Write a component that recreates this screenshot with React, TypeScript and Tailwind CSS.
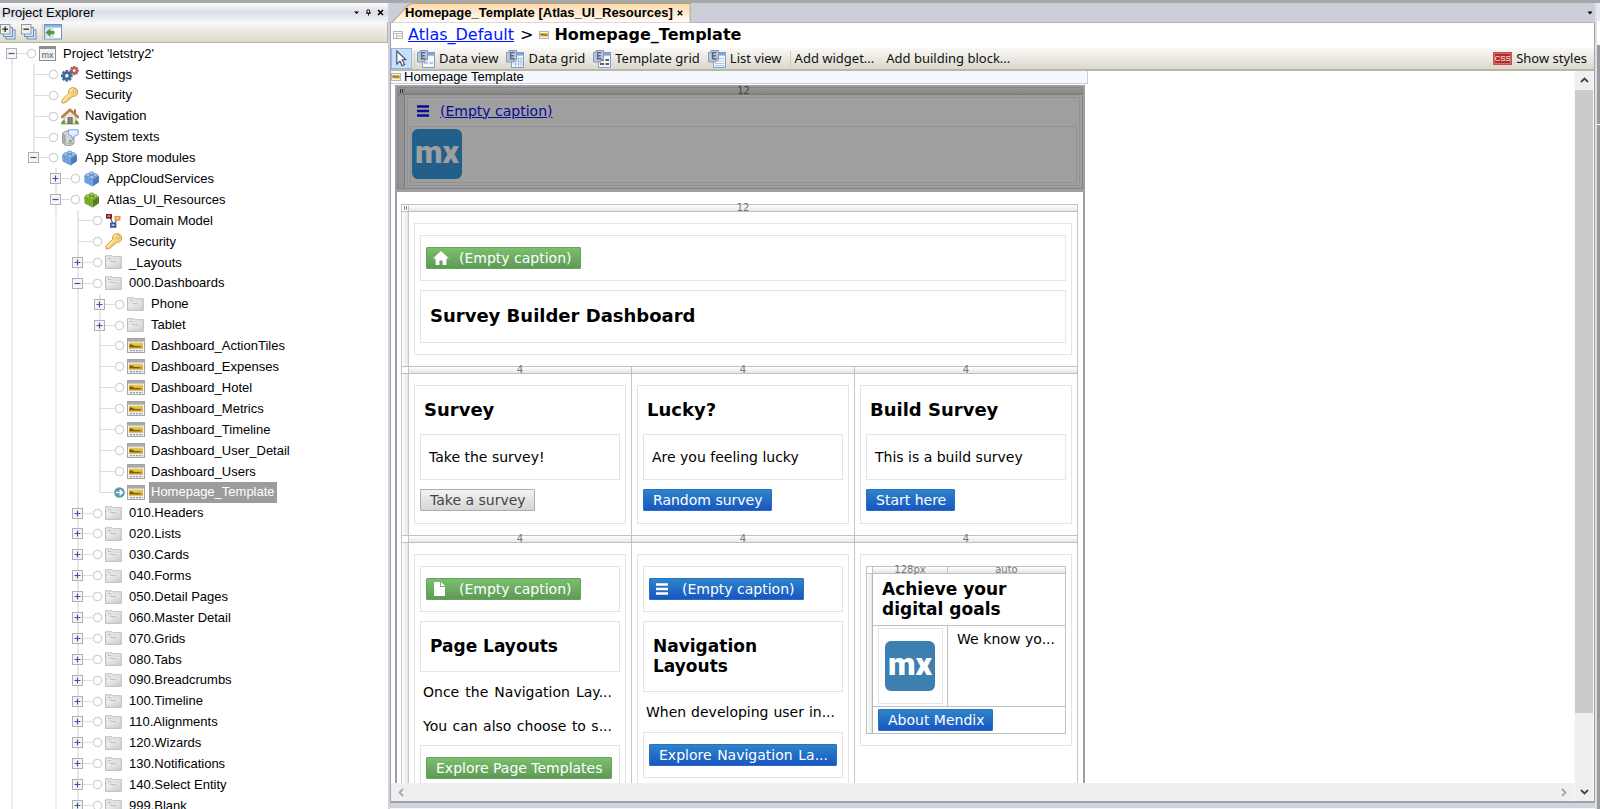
import React from "react";

/* ---------- icons ---------- */

function GearShape({ cx, cy, r, color }: { cx: number; cy: number; r: number; color: string }) {
  const teeth = [0, 45, 90, 135];
  return (
    <g>
      {teeth.map((a) => (
        <rect key={a} x={cx - r} y={cy - r * 0.24} width={r * 2} height={r * 0.48} fill={color} transform={`rotate(${a} ${cx} ${cy})`} />
      ))}
      <circle cx={cx} cy={cy} r={r * 0.74} fill={color} />
      <circle cx={cx} cy={cy} r={r * 0.3} fill="#fff" />
    </g>
  );
}

function SettingsIcon() {
  return (
    <svg width="18" height="16" viewBox="0 0 18 16" aria-hidden="true">
      <GearShape cx={13.2} cy={4.6} r={4.6} color="#b0615c" />
      <GearShape cx={5.8} cy={9.8} r={5.8} color="#3f6c97" />
    </svg>
  );
}

function KeyIcon() {
  return (
    <svg width="18" height="17" viewBox="0 0 18 17" aria-hidden="true">
      <path d="M9.2 1.4 Q12.5 -0.4 15 1.4 Q17.8 3.8 16.4 7 Q15.2 9.4 12.6 9.6 L11.2 9.6 L10 11 L8.6 11.4 L8.2 12.8 L6.5 13.2 L5.8 14.8 L2.4 16.2 L0.8 15.8 L1 13 L7.4 6.4 Q7 3 9.2 1.4 Z" fill="#f5d27a" stroke="#d3a346" strokeWidth="1" />
      <path d="M2.2 14 L8.6 7.4 M9 4.6 Q9.6 2.4 12 1.8" stroke="#fdf0b8" strokeWidth="1.3" fill="none" />
      <circle cx="13.4" cy="3.9" r="1.4" fill="#fff" stroke="#c9953a" strokeWidth="0.8" />
    </svg>
  );
}

function HouseIcon() {
  return (
    <svg width="18" height="17" viewBox="0 0 18 17" aria-hidden="true">
      <path d="M0 14.2 H18 V16.4 H0 Z" fill="#6fa653" />
      <path d="M3 8 L9 3 L15 8 V15.4 H3 Z" fill="#efe8d8" stroke="#a49a86" strokeWidth="0.8" />
      <path d="M13 1.2 H15 V5 H13 Z" fill="#a87a4e" />
      <path d="M1 9 L9 1.8 L17 9" fill="none" stroke="#b5824b" strokeWidth="2.6" strokeLinejoin="round" strokeLinecap="round" />
      <path d="M7 9.6 H11.2 V15.4 H7 Z" fill="#8a8782" stroke="#5f5c58" strokeWidth="0.8" />
      <circle cx="2.6" cy="13.8" r="1.6" fill="#5c9a3d" />
      <circle cx="15.4" cy="13.8" r="1.6" fill="#5c9a3d" />
    </svg>
  );
}

function SystemTextsIcon() {
  return (
    <svg width="18" height="17" viewBox="0 0 18 17" aria-hidden="true">
      <path d="M1.5 4 L5 2 H13 V14.5 L10 16.4 H4.5 L1.5 14 Z" fill="#d3d5d8" stroke="#8f9296" strokeWidth="0.9" />
      <path d="M1.5 4 L4.8 6 V16.2 L1.5 14 Z" fill="#a8abb0" />
      <path d="M7.4 0.8 H17.2 V5.6 L13 7.4 L11.6 10.6 L10.6 7 L7.4 5.4 Z" fill="#e3effc" stroke="#7aa3d6" strokeWidth="1" />
      <circle cx="9.4" cy="12" r="1.3" fill="#58b548" />
      <path d="M6.4 14.2 H12" stroke="#8f9296" strokeWidth="0.8" />
    </svg>
  );
}

function BrickIcon({ tone }: { tone: "blue" | "green" }) {
  const c = tone === "blue" ? ["#a9c9f2", "#6f9fdc", "#4c7bc0"] : ["#a6d04c", "#79a92b", "#55801a"];
  return (
    <svg width="17" height="16" viewBox="0 0 17 16" aria-hidden="true">
      <path d="M1 4.4 L8.4 1.6 L16 4.4 L9.6 8 Z" fill={c[0]} />
      <path d="M1 4.4 L9.6 8 V15.6 L1.6 11.6 Z" fill={c[1]} />
      <path d="M9.6 8 L16 4.4 V11.2 L9.6 15.6 Z" fill={c[2]} />
      <ellipse cx="8.6" cy="2.4" rx="2.3" ry="1.5" fill={c[0]} stroke={c[2]} strokeWidth="0.7" />
      <ellipse cx="4.8" cy="4.2" rx="2.2" ry="1.5" fill={c[0]} stroke={c[2]} strokeWidth="0.7" />
      <ellipse cx="12.2" cy="4.2" rx="2.2" ry="1.5" fill={c[0]} stroke={c[2]} strokeWidth="0.7" />
      <ellipse cx="8.8" cy="5.8" rx="2.2" ry="1.5" fill={c[0]} stroke={c[2]} strokeWidth="0.7" />
    </svg>
  );
}

function DomainIcon() {
  return (
    <svg width="17" height="16" viewBox="0 0 17 16" aria-hidden="true">
      <path d="M5 4 L7.6 10 M12.5 6 L9 11" stroke="#555" strokeWidth="1.2" />
      <rect x="1" y="1" width="6" height="4.6" fill="#7d2328" />
      <rect x="2.6" y="2.4" width="2.6" height="1.4" fill="#d9a9aa" />
      <rect x="9.5" y="3" width="6" height="4.6" fill="#f0933c" />
      <rect x="11" y="4.4" width="2.8" height="1.4" fill="#fbd6a9" />
      <rect x="5" y="9.6" width="6.4" height="5.2" fill="#2f5ea6" />
      <rect x="6.6" y="11.2" width="3" height="1.6" fill="#b9cdec" />
    </svg>
  );
}

function FolderIcon() {
  return (
    <svg width="17" height="14" viewBox="0 0 17 14" aria-hidden="true">
      <defs>
        <linearGradient id="folderFill" x1="0" y1="0" x2="1" y2="1">
          <stop offset="0" stopColor="#fafafa" />
          <stop offset="1" stopColor="#cbcbcb" />
        </linearGradient>
      </defs>
      <path d="M0.5 0.8 H7 L8 1.8 H16.3 V13.4 H0.5 Z" fill="#ececec" stroke="#b2b2b2" strokeWidth="0.9" />
      <path d="M1 13 V5.8 H5 L8.4 4 H15.8 V13 Z" fill="url(#folderFill)" stroke="#cdcdcd" strokeWidth="0.7" />
      <path d="M2.4 3.4 H6.4 M5.4 6.6 H11" stroke="#bdbdbd" strokeWidth="1" />
    </svg>
  );
}

function PageIcon() {
  return (
    <svg width="18" height="15" viewBox="0 0 18 15" aria-hidden="true">
      <defs>
        <linearGradient id="pageGold" x1="0" y1="0" x2="0" y2="1">
          <stop offset="0" stopColor="#e9cf5c" />
          <stop offset="1" stopColor="#cf9f1f" />
        </linearGradient>
      </defs>
      <rect x="0.5" y="0.5" width="17" height="14" fill="#f2f2f2" stroke="#a3a3a3" />
      <rect x="1" y="1" width="16" height="2.6" fill="#a9abae" />
      <rect x="2" y="4.6" width="14" height="6" fill="url(#pageGold)" />
      <path d="M2.5 6.6 H5 L7.4 8 H11 L14 8.4 V9.2 H2.5 Z" fill="#7c5b12" />
      <path d="M3 12.7 H5" stroke="#7fae6a" strokeWidth="1.2" />
      <path d="M6 12.7 H8 M9 12.7 H11 M12 12.7 H14" stroke="#7f9cd8" strokeWidth="1.2" />
      <path d="M14.6 12.7 H15.6" stroke="#d68a7f" strokeWidth="1.2" />
    </svg>
  );
}

function SmallPageIcon() {
  return (
    <svg width="10" height="8" viewBox="0 0 10 8" aria-hidden="true">
      <rect x="0.5" y="0.5" width="9" height="7" fill="#f2f2f2" stroke="#b4b4b4" />
      <rect x="1" y="2" width="8" height="3.4" fill="#dcb63a" />
      <path d="M2 3.6 H4 L6 4.2 H8" stroke="#7a5b15" strokeWidth="1" fill="none" />
    </svg>
  );
}

function LayoutIcon() {
  return (
    <svg width="10" height="8" viewBox="0 0 10 8" aria-hidden="true">
      <rect x="0.5" y="0.5" width="9" height="7" fill="#fff" stroke="#b4b4b4" />
      <path d="M1 2.6 H9 M3.5 2.6 V7 M3.5 5 H9" stroke="#b4b4b4" strokeWidth="0.9" />
    </svg>
  );
}

function ProjectIcon() {
  return (
    <span className="flex h-[15px] w-[17px] items-end justify-center border border-t-[3px] border-[#8f8f8f] bg-[#f3f3f3] font-['Liberation_Sans'] text-[9px] leading-[10px] text-[#555]">
      mx
    </span>
  );
}

function StackIcon({ sign }: { sign: "plus" | "minus" }) {
  return (
    <svg width="16" height="16" viewBox="0 0 16 16" aria-hidden="true">
      <rect x="6" y="6" width="9" height="9" fill="#dbe6f4" stroke="#6d8fb8" />
      <rect x="3.5" y="3.5" width="9" height="9" fill="#dbe6f4" stroke="#6d8fb8" />
      <rect x="0.5" y="0.5" width="9.5" height="9.5" fill="#f4efe0" stroke="#7f9cc0" />
      <path d="M2.4 5.2 H8" stroke="#2b2b2b" strokeWidth="1.3" />
      {sign === "plus" && <path d="M5.2 2.4 V8" stroke="#2b2b2b" strokeWidth="1.3" />}
    </svg>
  );
}

function LocateIcon() {
  return (
    <svg width="18" height="16" viewBox="0 0 18 16" aria-hidden="true">
      <rect x="0.5" y="0.5" width="17" height="14.5" fill="#fff" stroke="#6c93c4" />
      <rect x="1" y="1" width="16" height="2.6" fill="#8fb4e2" />
      <rect x="1" y="3.6" width="9" height="11" fill="#dce6f2" />
      <path d="M1.4 8.6 L6.4 4.2 V7 H10.4 V10.2 H6.4 V13 Z" fill="#4f9a3e" />
    </svg>
  );
}

type WidgetKind = "view" | "grid" | "template" | "list";

function WidgetIcon({ kind }: { kind: WidgetKind }) {
  return (
    <svg width="18" height="18" viewBox="0 0 18 18" aria-hidden="true">
      <rect x="5.5" y="2.5" width="12" height="15" fill="#f4f8fd" stroke="#7f9fcf" />
      <rect x="6" y="3" width="11" height="2.6" fill="#7ea4dc" />
      {kind === "view" && <path d="M7 13 H11 M12.5 13 H16" stroke="#a9b9d0" strokeWidth="1.6" />}
      {kind === "grid" && <path d="M7 9 H17 M7 11.5 H17 M7 14 H17 M9.5 7 V17 M12.5 7 V17 M15 7 V17" stroke="#a9c0e2" strokeWidth="0.9" />}
      {kind === "template" && <path d="M7 10 H11 M12.5 10 H16 M7 14 H11 M12.5 14 H16" stroke="#5d5f57" strokeWidth="1.8" />}
      {kind === "list" && <path d="M7 8.5 H16.5 M7 11 H16.5 M7 13.5 H16.5 M7 15.6 H16.5" stroke="#b5c8e6" strokeWidth="1.1" />}
      <path d="M0.5 2.5 H3 V0.5 H10.5 V10 H8 V12 H0.5 Z" fill="#bcc6da" stroke="#8c99b5" />
      <path d="M8.4 2.6 H4.6 V8.8 H8.4 M4.6 5.7 H7.8" fill="none" stroke="#56657f" strokeWidth="1.4" />
    </svg>
  );
}

function CursorIcon() {
  return (
    <svg width="11" height="17" viewBox="0 0 11 17" aria-hidden="true">
      <path d="M0.8 1 L9.8 9.6 L6.2 10 L8.6 14.6 L6.2 15.8 L4 11.2 L0.8 14 Z" fill="#fff" stroke="#3c4a66" strokeWidth="1.1" />
    </svg>
  );
}

function BurgerIcon() {
  return (
    <svg width="12" height="12" viewBox="0 0 12 12" aria-hidden="true">
      <path d="M0 1.5 H12 M0 6 H12 M0 10.5 H12" stroke="currentColor" strokeWidth="2.4" />
    </svg>
  );
}

function HomeGlyph() {
  return (
    <svg width="16" height="14" viewBox="0 0 16 14" aria-hidden="true">
      <path d="M8 0 L16 7.4 H13.4 V14 H9.6 V9.4 H6.4 V14 H2.6 V7.4 H0 Z" fill="currentColor" />
    </svg>
  );
}

function FileGlyph() {
  return (
    <svg width="16" height="14" viewBox="0 0 16 14" aria-hidden="true">
      <path d="M1 0 H7 V5 H12 V14 H1 Z M8 0 L12 4 H8 Z" fill="currentColor" />
    </svg>
  );
}

function Chevron({ dir }: { dir: "up" | "down" | "left" | "right" }) {
  const d = { up: "M1 6 L4.5 2.5 L8 6", down: "M1 3 L4.5 6.5 L8 3", left: "M6 1 L2.5 4.5 L6 8", right: "M3 1 L6.5 4.5 L3 8" }[dir];
  return (
    <svg width="9" height="9" viewBox="0 0 9 9" aria-hidden="true">
      <path d={d} fill="none" stroke="currentColor" strokeWidth="1.8" />
    </svg>
  );
}

/* ---------- project tree ---------- */

type Kind = "project" | "settings" | "key" | "house" | "texts" | "blue" | "green" | "domain" | "folder" | "page";
type Node = { label: string; level: number; kind: Kind; open?: boolean; last?: boolean; active?: boolean };

const folder = (label: string, level = 3, open = false): Node => ({ label, level, kind: "folder", open });
const page = (label: string): Node => ({ label, level: 4, kind: "page" });

const nodes: Node[] = [
  { label: "Project 'letstry2'", level: 0, kind: "project", open: true },
  { label: "Settings", level: 1, kind: "settings" },
  { label: "Security", level: 1, kind: "key" },
  { label: "Navigation", level: 1, kind: "house" },
  { label: "System texts", level: 1, kind: "texts" },
  { label: "App Store modules", level: 1, kind: "blue", open: true, last: true },
  { label: "AppCloudServices", level: 2, kind: "blue", open: false },
  { label: "Atlas_UI_Resources", level: 2, kind: "green", open: true },
  { label: "Domain Model", level: 3, kind: "domain" },
  { label: "Security", level: 3, kind: "key" },
  folder("_Layouts"),
  folder("000.Dashboards", 3, true),
  folder("Phone", 4),
  folder("Tablet", 4),
  page("Dashboard_ActionTiles"),
  page("Dashboard_Expenses"),
  page("Dashboard_Hotel"),
  page("Dashboard_Metrics"),
  page("Dashboard_Timeline"),
  page("Dashboard_User_Detail"),
  page("Dashboard_Users"),
  { label: "Homepage_Template", level: 4, kind: "page", last: true, active: true },
  folder("010.Headers"),
  folder("020.Lists"),
  folder("030.Cards"),
  folder("040.Forms"),
  folder("050.Detail Pages"),
  folder("060.Master Detail"),
  folder("070.Grids"),
  folder("080.Tabs"),
  folder("090.Breadcrumbs"),
  folder("100.Timeline"),
  folder("110.Alignments"),
  folder("120.Wizards"),
  folder("130.Notifications"),
  folder("140.Select Entity"),
  folder("999.Blank"),
];

const guidedLevels = [0, 2, 3];

function NodeIcon({ kind }: { kind: Kind }) {
  switch (kind) {
    case "project": return <ProjectIcon />;
    case "settings": return <SettingsIcon />;
    case "key": return <KeyIcon />;
    case "house": return <HouseIcon />;
    case "texts": return <SystemTextsIcon />;
    case "blue": return <BrickIcon tone="blue" />;
    case "green": return <BrickIcon tone="green" />;
    case "domain": return <DomainIcon />;
    case "folder": return <FolderIcon />;
    default: return <PageIcon />;
  }
}

function TreeRow({ node }: { node: Node }) {
  const expandable = node.open !== undefined;
  const spans = Array.from({ length: node.level }, (_, i) => i);
  return (
    <li className="flex min-h-0 shrink basis-[21px] items-stretch">
      {spans.map((i) => (
        <span key={i} className="flex w-[22px] shrink-0 pl-[11px]">
          {guidedLevels.includes(i) && <span className="w-0.5 bg-[#ececec]" />}
        </span>
      ))}
      <span className="grid w-[26px] shrink-0 items-center">
        <span className="col-start-1 row-start-1 flex h-full flex-col pl-[11px]">
          <span className={`w-0.5 flex-1 ${node.level > 0 ? "bg-[#e8e8e8]" : ""}`} />
          <span className={`w-0.5 flex-1 ${node.last ? "" : "bg-[#e8e8e8]"}`} />
        </span>
        <span className="col-start-1 row-start-1 ml-[12px] h-px bg-[#dcdcdc]" />
        {expandable && (
          <button
            type="button"
            aria-label={`${node.open ? "Collapse" : "Expand"} ${node.label}`}
            className="col-start-1 row-start-1 ml-1.5 flex h-[11px] w-[11px] items-center justify-center border border-[#b0b0b0] bg-[#f6f6f6]"
          >
            <svg width="7" height="7" viewBox="0 0 7 7" aria-hidden="true">
              <path d={node.open ? "M0.5 3.5 H6.5" : "M0.5 3.5 H6.5 M3.5 0.5 V6.5"} stroke="#3c55a5" strokeWidth="1.2" />
            </svg>
          </button>
        )}
      </span>
      <span className="flex w-[13px] shrink-0 items-center">
        <svg width="11" height="11" viewBox="0 0 11 11" aria-hidden="true">
          {node.active ? (
            <>
              <circle cx="5.5" cy="5.5" r="5.3" fill="#5a9bb0" />
              <path d="M2 5.5 H8 M5.6 2.8 L8.4 5.5 L5.6 8.2" stroke="#fff" strokeWidth="1.5" fill="none" />
            </>
          ) : (
            <circle cx="5.5" cy="5.5" r="4.2" fill="#fff" stroke="#d2d2d2" strokeWidth="1.3" />
          )}
        </svg>
      </span>
      <span className="flex w-[22px] shrink-0 items-center">
        <NodeIcon kind={node.kind} />
      </span>
      <span className={`flex items-center px-0.5 whitespace-nowrap ${node.active ? "bg-[#9c9c9c] text-white" : ""}`}>
        {node.label}
      </span>
    </li>
  );
}

function ProjectExplorer() {
  return (
    <aside className="flex w-[388px] shrink-0 flex-col overflow-hidden bg-white font-['Liberation_Sans',sans-serif] text-[13px] text-black">
      <header className="flex h-[19px] shrink-0 items-center justify-between bg-linear-to-b from-[#fafbfc] via-[#dcdfe8] to-[#f3f4f8] pr-1 pl-0.5">
        <h2>Project Explorer</h2>
        <div className="flex items-center gap-[5px]">
          <button type="button" aria-label="Window menu">
            <svg width="7" height="7" viewBox="0 0 7 7"><path d="M1 2.5 H6 L3.5 5 Z" fill="#000" /></svg>
          </button>
          <button type="button" aria-label="Pin">
            <svg width="7" height="7" viewBox="0 0 7 7"><path d="M2 1 H4.6 V4 H2 Z M1 4.2 H6 M3.5 4 V6.6" fill="#fff" stroke="#000" strokeWidth="0.9" /></svg>
          </button>
          <button type="button" aria-label="Close">
            <svg width="7" height="7" viewBox="0 0 7 7"><path d="M1 1 L6 6 M6 1 L1 6" stroke="#000" strokeWidth="1.5" /></svg>
          </button>
        </div>
      </header>
      <div className="flex h-[21px] shrink-0 items-center gap-[5px] border-r border-b border-[#b9b59c] bg-linear-to-b from-[#faf9f6] via-[#ebe8e1] to-[#dcd9cc]">
        <button type="button" aria-label="Expand all"><StackIcon sign="plus" /></button>
        <button type="button" aria-label="Collapse all"><StackIcon sign="minus" /></button>
        <span className="-mr-1 h-4 w-px bg-[#d0cdc0]" />
        <button type="button" aria-label="Locate in tree"><LocateIcon /></button>
      </div>
      <div className="min-h-0 flex-1">
        <ul className="flex h-[calc(100%+7px)] flex-col">
          {nodes.map((n, i) => (
            <TreeRow key={i} node={n} />
          ))}
        </ul>
      </div>
    </aside>
  );
}

/* ---------- editor canvas ---------- */

function Caption({ children, tone, icon, fill }: { children: string; tone: "green" | "blue" | "gray"; icon?: React.ReactNode; fill?: boolean }) {
  const tones = {
    green: "border-[#66a45b] from-[#7abf6e] to-[#5f9a56] text-white",
    blue: "border-[#2a6fc0] from-[#2f84c9] to-[#1a55c2] text-white",
    gray: "border-[#adadad] from-[#f3f3f3] to-[#d5d5d5] text-[#444]",
  };
  return (
    <button
      type="button"
      className={`flex h-[22px] items-center rounded-[1px] border bg-linear-to-b pr-2 text-[14px] whitespace-nowrap ${icon ? "pl-1.5" : "pl-[9px]"} ${fill ? "w-full" : ""} ${tones[tone]}`}
    >
      {icon && <span className="flex w-[26px] shrink-0 items-center">{icon}</span>}
      <span className={fill ? "w-full [text-align-last:justify]" : ""}>{children}</span>
    </button>
  );
}

function Box({ children, className = "" }: { children: React.ReactNode; className?: string }) {
  return <div className={`flex flex-col items-start border border-[#e4e4e4] ${className}`}>{children}</div>;
}

function Card({ children }: { children: React.ReactNode }) {
  return <section className="flex flex-col items-stretch border border-[#e4e4e4] px-[5px] py-[11px]">{children}</section>;
}

function Row({ label, columns, grip }: { label: string; columns: React.ReactNode[]; grip?: boolean }) {
  return (
    <div className="flex flex-col">
      <div className="flex h-2 border-y border-[#c0c0c0] bg-linear-to-b from-white to-[#e6e6e6] text-[10px] leading-[6px] text-[#777]">
        <span className="flex w-2 shrink-0 items-center justify-center gap-px border-x border-[#c6c6c6] bg-white">
          {grip && (
            <>
              <span className="h-1 w-px bg-[#888]" />
              <span className="h-1 w-px bg-[#888]" />
            </>
          )}
        </span>
        {columns.map((_, i) => (
          <span key={i} className="flex flex-1 items-center justify-center border-r border-[#c0c0c0]">{label}</span>
        ))}
      </div>
      <div className="flex">
        <span className="w-2 shrink-0 border-x border-[#c6c6c6] bg-linear-to-r from-white to-[#e6e6e6]" />
        {columns.map((c, i) => (
          <div key={i} className="min-w-0 flex-1 border-r border-[#c6c6c6] px-[5px] py-[11px]">{c}</div>
        ))}
      </div>
    </div>
  );
}

function Paragraph({ children }: { children: string }) {
  return <p className="pr-2 pl-[3px] text-[14px] leading-[34px] whitespace-nowrap [text-align-last:justify]">{children}</p>;
}

function MxLogo({ dim }: { dim?: boolean }) {
  return (
    <div className={`flex h-[50px] w-[50px] items-center justify-center rounded-md pb-1 font-['Roboto',sans-serif] text-[32px] leading-none font-black ${dim ? "bg-[#235f8b] text-[#9f9f9f]" : "bg-[#3b80b0] text-white"}`}>
      mx
    </div>
  );
}

function SurveyCard({ title, text, action, tone }: { title: string; text: string; action: string; tone: "gray" | "blue" }) {
  return (
    <section className="flex flex-col items-start border border-[#e4e4e4] px-[5px] pb-3">
      <h3 className="pl-1 text-[18px] leading-[48px] font-bold">{title}</h3>
      <Box className="mb-[9px] w-full px-2 py-[11px]">
        <p className="text-[14px] leading-[22px]">{text}</p>
      </Box>
      <Caption tone={tone}>{action}</Caption>
    </section>
  );
}

function Canvas() {
  return (
    <div className="w-full max-w-[690px] border-x-2 border-[#9f9f9f] bg-white font-['DejaVu_Sans',sans-serif] text-black">
      <div className="bg-[#9f9f9f] pt-0.5 pb-[3px]">
        <div className="border border-[#858585]">
          <div className="flex h-[7px] border-b border-[#7c7c7c] bg-linear-to-b from-[#969696] to-[#858585] text-[10px] leading-[6px] text-[#444]">
            <span className="flex w-[7px] items-center justify-center gap-px border-r border-[#7c7c7c]">
              <span className="h-1 w-px bg-[#333]" />
              <span className="h-1 w-px bg-[#333]" />
            </span>
            <span className="flex flex-1 items-center justify-center">12</span>
          </div>
          <div className="flex">
            <span className="w-[7px] shrink-0 border-r border-[#7c7c7c] bg-[#939393]" />
            <div className="flex-1 p-0.5">
              <div className="border border-[#919191] px-0.5 pt-0.5 pb-0.5">
                <a href="#menu" className="ml-[7px] flex h-[26px] items-center gap-[11px] pb-1 text-[14px] text-[#0a0a96]">
                  <BurgerIcon />
                  <span className="underline">(Empty caption)</span>
                </a>
                <div className="border border-[#919191] pt-0.5 pb-[3px] pl-px">
                  <MxLogo dim />
                </div>
              </div>
            </div>
          </div>
        </div>
      </div>
      <div className="pt-3 pr-[5px] pl-1">
        <Row
          label="12"
          grip
          columns={[
            <Card key="a">
              <Box className="mb-[9px] px-[5px] py-[11px]">
                <Caption tone="green" icon={<HomeGlyph />}>(Empty caption)</Caption>
              </Box>
              <Box className="px-[9px] pb-0.5">
                <h1 className="text-[18px] leading-[49px] font-bold">Survey Builder Dashboard</h1>
              </Box>
            </Card>,
          ]}
        />
        <Row
          label="4"
          columns={[
            <SurveyCard key="a" title="Survey" text="Take the survey!" action="Take a survey" tone="gray" />,
            <SurveyCard key="b" title="Lucky?" text="Are you feeling lucky" action="Random survey" tone="blue" />,
            <SurveyCard key="c" title="Build Survey" text="This is a build survey" action="Start here" tone="blue" />,
          ]}
        />
        <Row
          label="4"
          columns={[
            <Card key="a">
              <Box className="mb-[9px] px-[5px] py-[11px]">
                <Caption tone="green" icon={<FileGlyph />}>(Empty caption)</Caption>
              </Box>
              <Box className="mb-[3px] px-[9px] pt-3.5 pb-[15px]">
                <h3 className="text-[17px] leading-5 font-bold">Page Layouts</h3>
              </Box>
              <Paragraph>Once the Navigation Lay...</Paragraph>
              <Paragraph>You can also choose to s...</Paragraph>
              <Box className="mt-0.5 px-[5px] py-[11px]">
                <Caption tone="green">Explore Page Templates</Caption>
              </Box>
            </Card>,
            <Card key="b">
              <Box className="mb-[9px] px-[5px] py-[11px]">
                <Caption tone="blue" icon={<BurgerIcon />}>(Empty caption)</Caption>
              </Box>
              <Box className="mb-[3px] px-[9px] pt-3.5 pb-[15px]">
                <h3 className="w-[130px] text-[17px] leading-5 font-bold">Navigation Layouts</h3>
              </Box>
              <Paragraph>When developing user in...</Paragraph>
              <Box className="mt-[3px] px-[5px] py-[11px]">
                <Caption tone="blue" fill>Explore Navigation La...</Caption>
              </Box>
            </Card>,
            <Card key="c">
              <div className="flex flex-col border border-[#c0c0c0]">
                <div className="flex h-[7px] border-b border-[#c0c0c0] bg-linear-to-b from-white to-[#e6e6e6] text-[10px] leading-[6px] text-[#777]">
                  <span className="w-1.5 border-r border-[#c0c0c0] bg-white" />
                  <span className="flex w-[75px] items-center justify-center border-r border-[#c0c0c0]">128px</span>
                  <span className="flex flex-1 items-center justify-center">auto</span>
                </div>
                <div className="flex">
                  <span className="w-1.5 shrink-0 border-r border-[#b5b5b5] bg-linear-to-r from-white to-[#e6e6e6]" />
                  <div className="flex min-w-0 flex-1 flex-col">
                    <h3 className="border-b border-[#c0c0c0] px-[9px] pt-[5px] pb-1.5 text-[17px] leading-5 font-bold">Achieve your digital goals</h3>
                    <div className="flex border-b border-[#c0c0c0]">
                      <div className="w-[75px] shrink-0 border-r border-[#c0c0c0] py-0.5 pr-1 pl-[5px]">
                        <Box className="px-[6px] py-3"><MxLogo /></Box>
                      </div>
                      <p className="flex-1 pr-2.5 pl-[9px] text-[14px] leading-[26px] whitespace-nowrap [text-align-last:justify]">We know yo...</p>
                    </div>
                    <div className="flex py-0.5 pl-[5px]">
                      <Caption tone="blue">About Mendix</Caption>
                    </div>
                  </div>
                </div>
              </div>
            </Card>,
          ]}
        />
      </div>
    </div>
  );
}

function ToolButton({ label, kind }: { label: string; kind?: WidgetKind }) {
  return (
    <button type="button" className="flex items-center gap-1 whitespace-nowrap">
      {kind && <WidgetIcon kind={kind} />}
      <span>{label}</span>
    </button>
  );
}

function Editor() {
  return (
    <main className="flex min-w-0 flex-1 flex-col">
      <div className="flex h-5 shrink-0 items-end justify-between border-b border-[#b2b5c0] bg-[#cbced9] pl-0.5">
        <div className="grid h-[19px]">
          <svg className="col-start-1 row-start-1 h-full w-full" viewBox="0 0 291 19" preserveAspectRatio="none" aria-hidden="true">
            <defs>
              <linearGradient id="tabFill" x1="0" y1="0" x2="0" y2="1">
                <stop offset="0" stopColor="#fbd9a8" />
                <stop offset="1" stopColor="#fffdf8" />
              </linearGradient>
            </defs>
            <path d="M0 19 L14 4 Q17 0.5 22 0.5 H290.5 V19" fill="url(#tabFill)" stroke="#b9a27c" />
          </svg>
          <div className="col-start-1 row-start-1 flex items-center gap-1 pr-0.5 pl-[13px] font-['Liberation_Sans'] text-[13px] font-bold text-black">
            <span>Homepage_Template [Atlas_UI_Resources]</span>
            <button type="button" aria-label="Close tab">
              <svg width="6" height="6" viewBox="0 0 6 6"><path d="M0.8 0.8 L5.2 5.2 M5.2 0.8 L0.8 5.2" stroke="#000" strokeWidth="1.4" /></svg>
            </button>
          </div>
        </div>
        <button type="button" aria-label="Open documents" className="self-center pr-0.5">
          <svg width="6" height="6" viewBox="0 0 6 6"><path d="M0.5 1.5 H5.5 L3 4.5 Z" fill="#000" /></svg>
        </button>
      </div>
      <div className="flex min-h-0 flex-1 flex-col border-x border-b-2 border-[#a0a3ab] bg-white">
        <nav aria-label="Breadcrumb" className="flex h-[25px] shrink-0 items-center gap-[5px] pb-0.5 pl-0.5 font-['DejaVu_Sans',sans-serif] text-[16px] text-black">
          <LayoutIcon />
          <a href="#atlas-default" className="text-[#0018ff] underline">Atlas_Default</a>
          <span className="px-px">&gt;</span>
          <SmallPageIcon />
          <strong>Homepage_Template</strong>
        </nav>
        <div className="flex h-[23px] shrink-0 items-center gap-2 border-b-2 border-[#bab8a2] bg-linear-to-b from-[#faf9f6] via-[#ebe8e1] to-[#dbd9cd] pr-[7px] font-['Noto_Sans',sans-serif] text-[13px] text-[#111]">
          <button type="button" aria-label="Select" className="-mr-1.5 flex h-[21px] w-[21px] items-center justify-center border border-[#8fb8e8] bg-[#c9e0f8]">
            <CursorIcon />
          </button>
          <span className="-mr-1.5 h-4 w-px bg-[#cfccc0]" />
          <ToolButton kind="view" label="Data view" />
          <ToolButton kind="grid" label="Data grid" />
          <ToolButton kind="template" label="Template grid" />
          <ToolButton kind="list" label="List view" />
          <span className="-mr-1 h-4 w-px bg-[#cfccc0]" />
          <div className="flex gap-3">
            <ToolButton label="Add widget..." />
            <ToolButton label="Add building block..." />
          </div>
          <button type="button" className="ml-auto flex items-center gap-1">
            <span className="flex h-[13px] w-[19px] items-center justify-center border border-[#c94b4b] bg-[#b22c2c] font-['Liberation_Sans'] text-[8px] leading-none text-white outline-1 -outline-offset-2 outline-[#cf6f6f]">
              CSS
            </span>
            Show styles
          </button>
        </div>
        <div className="flex min-h-0 flex-1">
          <div className="flex min-w-0 flex-1 flex-col">
            <div className="min-h-0 flex-1 overflow-hidden">
              <div className="flex max-w-[697px] items-center gap-[3px] border-r border-b border-[#cbd0d8] bg-[#f5f9ff] font-['Liberation_Sans'] text-[13px] leading-3 text-black">
                <SmallPageIcon />
                <span>Homepage Template</span>
              </div>
              <div className="pt-px pl-1">
                <Canvas />
              </div>
            </div>
            <div className="flex h-[18px] shrink-0 items-center justify-between bg-[#efefef] px-1.5 text-[#a8a8a8]">
              <button type="button" aria-label="Scroll left"><Chevron dir="left" /></button>
              <button type="button" aria-label="Scroll right"><Chevron dir="right" /></button>
            </div>
          </div>
          <div className="flex w-5 shrink-0 flex-col border-x border-[#f8f8f8] bg-[#efefef] text-[#444]">
            <button type="button" aria-label="Scroll up" className="flex h-[19px] items-center justify-center"><Chevron dir="up" /></button>
            <div className="min-h-0 flex-1"><div className="h-[90%] bg-[#cbcbcb]" /></div>
            <button type="button" aria-label="Scroll down" className="flex h-[19px] items-center justify-center"><Chevron dir="down" /></button>
          </div>
        </div>
      </div>
      <div className="h-[5px] shrink-0 bg-[#d0d3de]" />
      <div className="h-px shrink-0 bg-[#f5f6fa]" />
    </main>
  );
}

export default function App() {
  return (
    <div className="flex h-screen flex-col overflow-hidden border-t-[3px] border-[#a8a8a8] bg-[#cfd2dc]">
      <div className="flex min-h-0 flex-1">
        <ProjectExplorer />
        <div className="w-0.5 shrink-0 bg-[#cfd2dc]" />
        <Editor />
        <div className="w-0.5 shrink-0 bg-[#dcdee8]" />
        <div className="flex w-[3px] shrink-0 flex-col bg-[#9b9b9b]">
          <div className="h-[18px] bg-[#e6e8f0]" />
          <div className="h-6 bg-white" />
          <div className="h-[79px]" />
          <div className="h-px bg-white" />
          <div className="flex-1" />
        </div>
      </div>
    </div>
  );
}
